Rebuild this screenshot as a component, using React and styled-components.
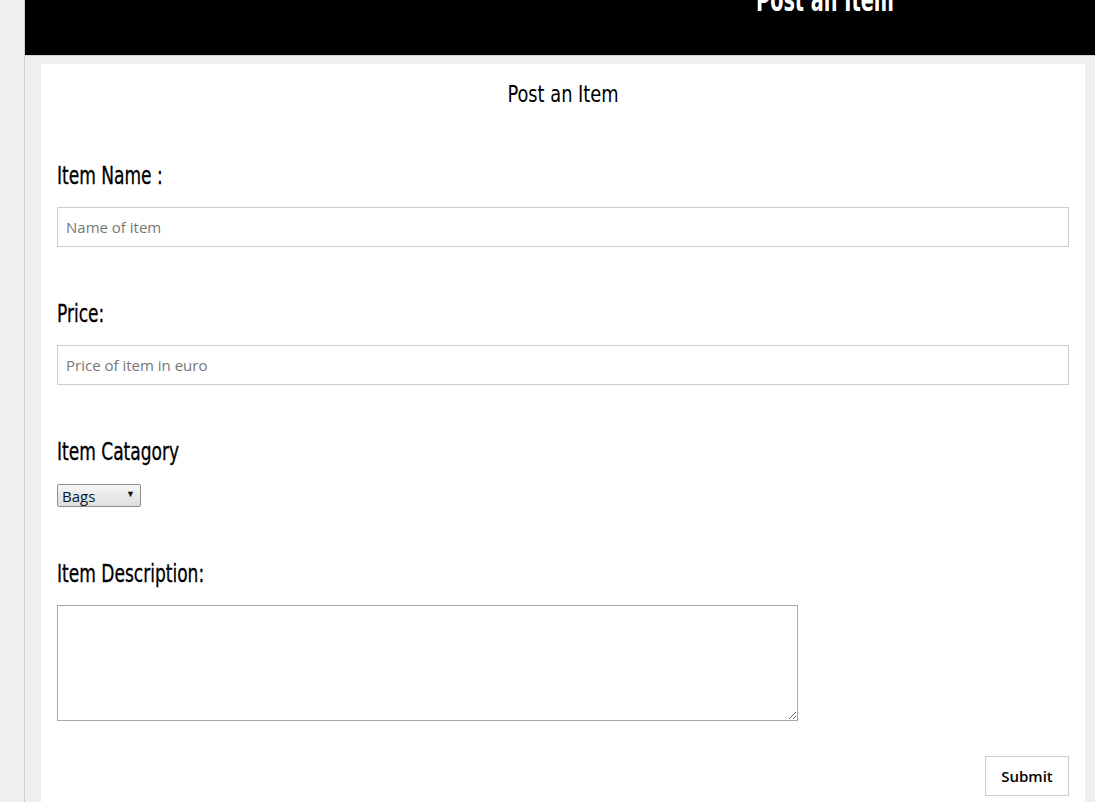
import React from "react";
import styled, { createGlobalStyle } from "styled-components";

const Global = createGlobalStyle`
  html, body { margin: 0; padding: 0; background: #f0f0f0; }
  body { font-family: "Open Sans", "Liberation Sans", sans-serif; overflow: hidden; }
  * { box-sizing: border-box; }
`;

const heading = `"DejaVu Sans Condensed", "Liberation Sans", sans-serif`;

const Page = styled.div`
  display: flex;
  min-height: 802px;
  background: #f0f0f0;
`;

const SideStrip = styled.div`
  width: 24px;
  flex: none;
  background: #f0f0f0;
`;

const Main = styled.div`
  flex: 1;
  border-left: 1px solid #cfcfcf;
  background: #efefef;
  display: flex;
  flex-direction: column;
`;

const Header = styled.header`
  height: 56px;
  background: #000;
  border-bottom: 1px solid #d0d0d0;
  padding-left: 731px;
  overflow: hidden;
`;

const HeaderTitle = styled.h1`
  display: block;
  width: max-content;
  margin: -20px 0 0;
  font-family: ${heading};
  font-weight: 700;
  font-size: 32px;
  line-height: 40px;
  color: #fff;
  white-space: nowrap;
  transform: scaleX(0.67);
  transform-origin: left center;
`;

const Content = styled.div`
  padding: 8px 10px 0 16px;
  flex: 1;
  display: flex;
`;

const Card = styled.form`
  flex: 1;
  background: #fff;
  padding: 15px 16px 6px;
  display: flex;
  flex-direction: column;
`;

const CardTitle = styled.h2`
  margin: 0 0 53px;
  text-align: center;
  font-family: ${heading};
  font-weight: 400;
  font-size: 23px;
  line-height: 30px;
  color: #000;
  transform: scaleX(0.86);
`;

const Field = styled.div`
  display: flex;
  flex-direction: column;
  align-items: flex-start;
  margin-bottom: ${(p) => p.$gap ?? 53}px;
`;

const Label = styled.label`
  display: inline-block;
  font-family: ${heading};
  font-size: 24px;
  line-height: 30px;
  color: #000;
  white-space: nowrap;
  transform: scaleX(0.79);
  transform-origin: left center;
  -webkit-text-stroke: 0.3px #000;
  margin-top: -1px;
  margin-bottom: ${(p) => p.$gap ?? 16}px;
`;

const TextInput = styled.input`
  width: 100%;
  height: 40px;
  border: 1px solid #ccc;
  padding: 0 8px;
  font-family: "Open Sans", sans-serif;
  font-size: 15px;
  color: #333;
  outline: none;
  &::placeholder { color: #777; }
`;

const SelectWrap = styled.div`
  position: relative;
  width: 84px;
  height: 23px;
`;

const Select = styled.select`
  appearance: none;
  width: 84px;
  height: 23px;
  border: 1px solid #8e8e8e;
  border-radius: 2px;
  background: linear-gradient(#f6f6f6, #dedede);
  font-family: "Open Sans", sans-serif;
  font-size: 15px;
  color: #001a33;
  padding: 0 0 0 4px;
  outline: none;
`;

const Arrow = styled.span`
  position: absolute;
  right: 6px;
  top: 4px;
  font-size: 9px;
  line-height: 12px;
  color: #111;
  pointer-events: none;
`;

const TextArea = styled.textarea`
  width: 741px;
  height: 116px;
  border: 1px solid #a9a9a9;
  resize: both;
  font-family: "Open Sans", sans-serif;
  font-size: 14px;
  outline: none;
`;

const Actions = styled.div`
  display: flex;
  justify-content: flex-end;
`;

const SubmitButton = styled.button`
  width: 84px;
  height: 40px;
  background: #fff;
  border: 1px solid #ccc;
  font-family: "Open Sans", sans-serif;
  font-weight: 600;
  font-size: 15px;
  color: #000;
`;

export default function App() {
  return (
    <>
      <Global />
      <Page>
        <SideStrip />
        <Main>
          <Header>
            <HeaderTitle>Post an Item</HeaderTitle>
          </Header>
          <Content>
            <Card onSubmit={(e) => e.preventDefault()}>
              <CardTitle>Post an Item</CardTitle>
              <Field>
                <Label>Item Name :</Label>
                <TextInput placeholder="Name of item" />
              </Field>
              <Field>
                <Label>Price:</Label>
                <TextInput placeholder="Price of item in euro" />
              </Field>
              <Field>
                <Label $gap={17}>Item Catagory</Label>
                <SelectWrap>
                  <Select defaultValue="Bags">
                    <option>Bags</option>
                    <option>Shoes</option>
                    <option>Clothes</option>
                  </Select>
                  <Arrow>▼</Arrow>
                </SelectWrap>
              </Field>
              <Field $gap={35}>
                <Label>Item Description:</Label>
                <TextArea />
              </Field>
              <Actions>
                <SubmitButton type="submit">Submit</SubmitButton>
              </Actions>
            </Card>
          </Content>
        </Main>
      </Page>
    </>
  );
}
